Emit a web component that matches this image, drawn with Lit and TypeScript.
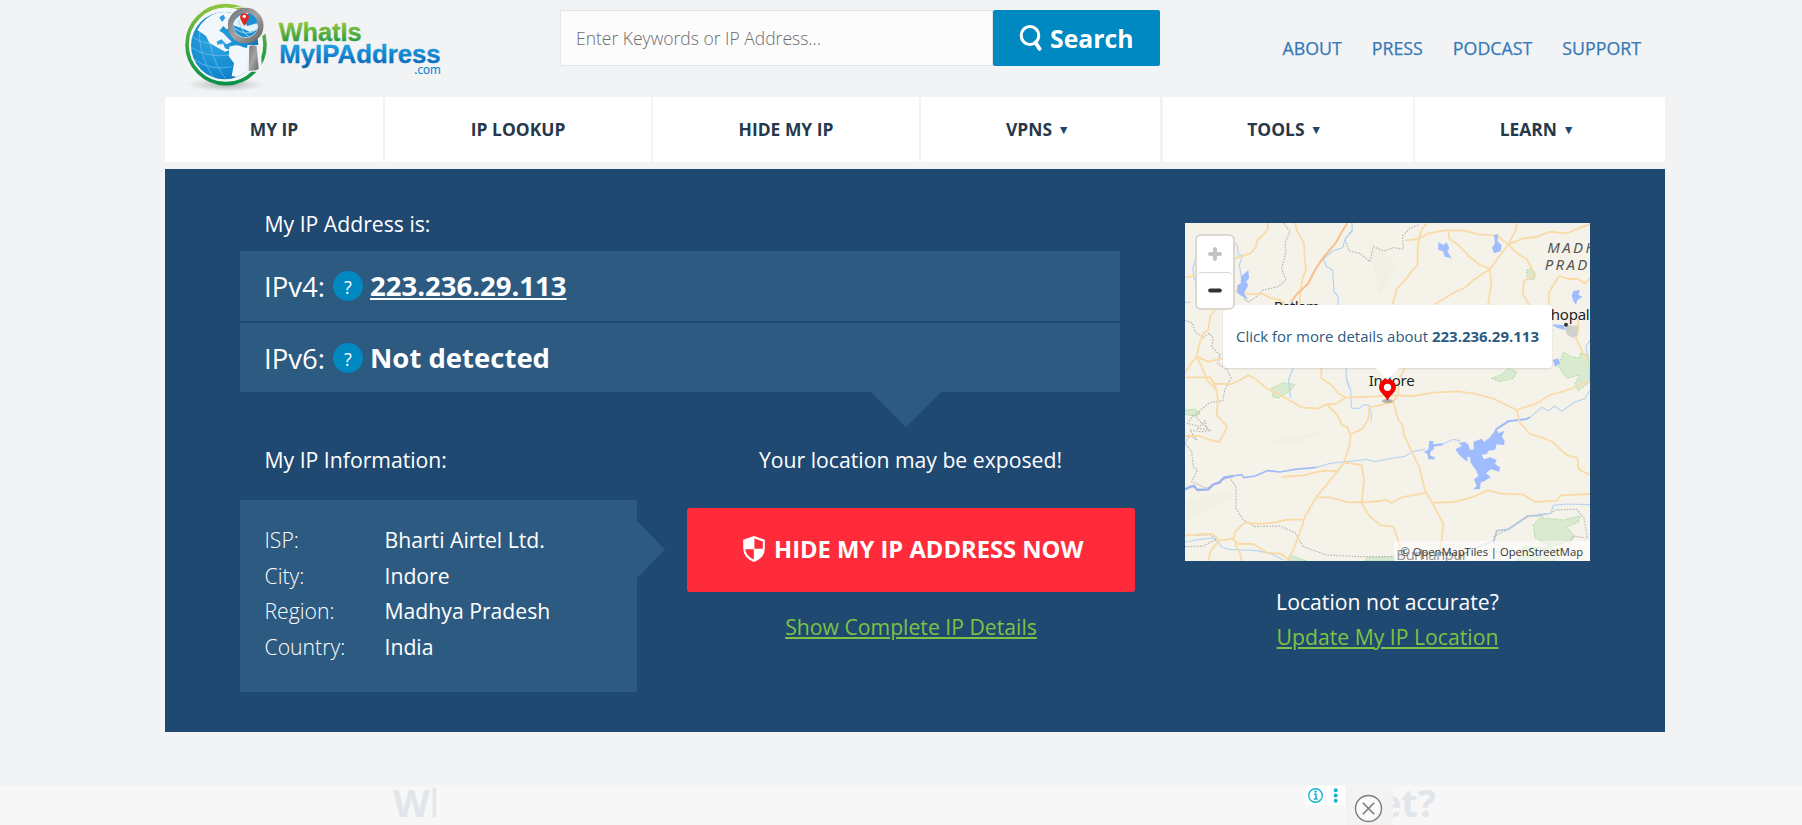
import { LitElement, html, svg, css } from "lit";
import { customElement } from "lit/decorators.js";

const topLinks = ["ABOUT", "PRESS", "PODCAST", "SUPPORT"];
const navItems = [
  { label: "MY IP", menu: false },
  { label: "IP LOOKUP", menu: false },
  { label: "HIDE MY IP", menu: false },
  { label: "VPNS", menu: true },
  { label: "TOOLS", menu: true },
  { label: "LEARN", menu: true },
];
const info = [
  ["ISP:", "Bharti Airtel Ltd."],
  ["City:", "Indore"],
  ["Region:", "Madhya Pradesh"],
  ["Country:", "India"],
];

const roadsNorth = [
  "M345 24 L352 50 372 85 374 130 378 165 368 190 362 225 358 280",
  "M262 24 L264 42 250 60 232 75 228 95 212 115 190 122 160 132",
  "M160 228 L185 226 205 238 245 235 270 248 300 255 330 275",
  "M675 76 L715 72 745 55 795 46 850 46 895 58 950 62 985 88",
  "M742 24 L726 42 718 65 714 95 712 150 692 172 680 190 650 222 638 268",
  "M805 48 L808 72 835 90 868 125 900 150 930 162",
  "M1012 24 L1005 50 985 88 962 118 930 162 880 195 855 218 830 228 765 268",
  "M930 162 L934 205 924 272",
  "M985 88 L1015 118 1040 132 1054 158 1062 180 1032 198 1028 235 1048 272",
  "M985 88 L1030 70 1070 66 1110 50 1160 55 1200 38 1230 28",
  "M1108 285 L1106 235 1120 210 1138 183 1165 192 1195 192 1215 206 1230 190",
  "M1195 310 L1195 345 1188 370 1208 412 1230 440",
  "M15 187 L45 183",
  "M112 278 L92 300 84 345 70 355 58 385 50 425 30 450 15 475",
  "M50 425 L68 462 80 495 105 520",
  "M50 425 L85 440 130 430",
  "M675 460 L658 490 655 520",
];
const roadsSouth = [
  "M15 -8 L60 -8 90 -8 105 12 155 12 185 -2 205 -15 225 -4 260 25 305 48 365 82 412 86 440 73 465 72 500 52 580 50 625 46 700 48 760 38 830 34 880 40 940 56 1010 90 1070 70 1110 45 1150 34 1180 24 1230 0",
  "M424 -38 L424 -5 455 15 475 40 500 54",
  "M655 0 L655 40 640 66 655 120 668 135 672 165 695 215 718 260 735 330 762 378 790 432 786 470 775 545",
  "M640 66 L608 74 568 82 564 120 545 148 512 162 508 200 492 248 460 290 410 350 375 410 362 450 340 510 320 545",
  "M440 73 L470 102 486 135 502 142 510 165",
  "M492 248 L545 255 552 300 545 370 568 408 602 436 640 440 650 468 660 500 672 545",
  "M410 352 L450 352 505 367 570 366 620 360 635 369 665 352 738 338",
  "M305 291 L370 286 430 272 472 273",
  "M758 368 L820 366 870 354 925 331 960 340 1030 344 1065 366 1130 362 1142 346 1230 342",
  "M1010 90 L1020 128 1050 162 1085 172 1118 186 1160 225 1192 234 1196 268 1230 285",
  "M372 418 L315 420 290 426 240 432 195 427 165 455 160 480 175 492 220 492 262 518 305 522 330 545",
  "M15 466 L80 461 100 463 118 482 160 475",
  "M118 482 L92 512 84 545",
  "M165 490 L180 520 185 545",
  "M96 0 L108 25 114 60 110 105 142 140 118 186 90 180 58 168 15 168",
];
const streamsNorth = [
  "M516 24 L517 48 496 70 488 98 458 108 430 132 440 155 458 165 462 230 474 245 475 270",
  "M160 80 L172 92 175 118 188 122 178 150 184 185",
  "M48 130 L38 160 42 190 50 205",
  "M498 460 L500 495 508 520",
  "M340 460 L325 495 332 550",
  "M15 262 L30 262",
  "M1118 332 L1165 335",
  "M1230 375 L1218 395 1222 425",
];
const streamsSouth = [
  "M500 0 L512 30 514 84 535 86 552 74 566 76 573 95 574 122",
  "M410 262 L450 250 500 245 560 238 585 245 640 234 672 230 700 214 735 208",
  "M760 194 L790 192 820 178 838 182 840 195",
  "M1050 112 L1085 82 1105 92 1125 78 1145 94 1180 68 1215 56 1230 30",
  "M1230 374 L1160 372 1120 376 1112 400 1075 402",
  "M15 486 L60 478 100 474 125 500 145 508 230 512 270 520 310 540",
  "M945 480 L905 498 860 515",
];
const bordersNorth = [
  "M310 24 L330 48 315 85 318 110 305 160 318 195 295 215 250 225 225 248 205 262 190 250",
  "M516 45 L495 75 508 108 540 115 570 140 580 95 612 108 640 98 670 102 668 62 690 40 715 30",
  "M15 315 L38 325 45 350 70 368 88 355 100 370 95 395 120 420 112 445 140 462 155 492",
];
const bordersSouth = [
  "M150 0 L135 28 128 62 88 68 45 105 60 125 92 152 60 155 30 150 50 180 30 165 15 190 35 215 40 260 52 270 35 305 80 325 125 300 148 292 168 320 168 385 190 420 225 440 300 438 345 458 370 500 440 525 540 530 640 530",
  "M40 105 L22 130 60 140 75 122 80 148 48 145",
  "M940 470 L985 448 1040 408 1110 402 1125 390 1190 388 1212 415 1222 475 1180 468 1168 490",
  "M15 500 L70 498 108 478 90 464 40 466",
];

@customElement("app-root")
export class AppRoot extends LitElement {
  static styles = css`
    :host {
      display: block;
      height: 825px;
      overflow: hidden;
      background: #f1f3f5;
      font-family: "Open Sans", "Noto Sans", sans-serif;
      color: #fff;
    }
    .container { width: 1500px; margin-left: 165px; }
    header { display: flex; align-items: flex-start; height: 97px; }
    .logo { width: 280px; height: 97px; flex: none; margin-right: 115px; }
    .search { display: flex; margin-top: 10px; width: 600px; }
    .field {
      box-sizing: border-box; width: 433px; height: 56px; padding-left: 15px;
      border: 1px solid #e2e5e8; background: #fcfcfc;
      font: 300 17.5px/54px "Open Sans", sans-serif; color: #6c6c6c;
    }
    .go {
      box-sizing: border-box; width: 167px; height: 56px; padding-left: 25px;
      display: flex; align-items: center; gap: 5px;
      background: #0088c0; border-radius: 2px; font-weight: 700; font-size: 24.8px; line-height: 54px;
    }
    .go svg { width: 27px; height: 28px; }
    .links { margin: 36px 24px 0 auto; display: flex; gap: 30px; font-size: 17.8px; line-height: 24px; color: #3679b7; -webkit-text-stroke: 0.25px #3679b7; }
    nav {
      display: grid; grid-template-columns: 218px 265.5px 265.5px 239px 250px 250px;
      justify-content: space-between; height: 65px; margin-bottom: 7px;
    }
    .tab {
      display: flex; align-items: center; justify-content: center; gap: 8px; padding-bottom: 1px;
      background: #fff; color: #27384a; font-weight: 700; font-size: 17.45px;
    }
    .arrow { font: 9.5px "DejaVu Sans", sans-serif; color: #204972; margin-right: 8px; padding-top: 1px; }

    .hero { display: flex; box-sizing: border-box; height: 563px; padding-left: 75px; background: #204972; font-size: 21.2px; line-height: 30px; }
    .left { width: 945px; padding-top: 40px; }
    .heading { padding-left: 24.5px; }
    .ips { position: relative; width: 880px; margin-top: 12px; display: grid; grid-template-rows: 70px 69px; gap: 2px; }
    .ip { display: flex; align-items: flex-start; padding: 20px 0 0 24px; background: #2d5a80; line-height: 30px; box-sizing: border-box; }
    .ver { width: 69px; font-weight: 400; font-size: 27.6px; }
    .help { width: 30px; height: 30px; margin-right: 7px; border-radius: 50%; background: #0088c0; text-align: center; font-size: 18px; line-height: 32px; }
    .val { font-weight: 700; font-size: 27.5px; }
    .under { text-decoration: underline; text-decoration-thickness: 2px; text-underline-offset: 2px; }
    .down { position: absolute; left: 631px; top: 141px; width: 70px; height: 35px; background: #2d5a80; clip-path: polygon(0 0, 100% 0, 50% 100%); }
    .lower { display: grid; grid-template-columns: 397px 448px; gap: 50px; margin-top: 53px; }
    .panel { position: relative; box-sizing: border-box; height: 192px; margin-top: 25px; padding: 22.4px 0 0 24.5px; background: #2d5a80; }
    .side { position: absolute; left: 397px; top: 21px; width: 28px; height: 57px; background: #2d5a80; clip-path: polygon(0 0, 100% 50%, 0 100%); }
    .row { display: grid; grid-template-columns: 120px 1fr; line-height: 35.4px; font-size: 21.2px; }
    .key { font-weight: 300; }
    .cta { text-align: center; }
    .cta > div:first-child { margin-right: 1px; }
    .hide {
      display: flex; align-items: center; gap: 8px; box-sizing: border-box; height: 84px; margin: 33px 0 20px; padding: 0 0 2px 55px;
      border-radius: 3px; background: #ff2b3a; font-weight: 700; font-size: 23.75px;
    }
    .hide svg { width: 24px; height: 28px; }
    .green { color: #7dc243; text-decoration: underline; text-decoration-thickness: 2px; text-underline-offset: 2px; }
    .right { width: 405px; padding-top: 54px; text-align: center; line-height: 35px; }
    .map { position: relative; width: 405px; height: 338px; margin-bottom: 22.5px; overflow: hidden; background: #f5f2ea; }
    .tiles { display: block; width: 405px; height: 338px; }
    .popup {
      position: absolute; left: 38px; top: 82px; width: 329px; height: 63px; border-radius: 3px; background: #fff;
      box-shadow: 0 1px 2px rgba(0, 0, 0, 0.12); color: #2c5a80; font-size: 14.98px; line-height: 63px; white-space: nowrap;
    }
    .tip { position: absolute; left: 191px; top: 145px; width: 23px; height: 12px; background: #fff; clip-path: polygon(0 0, 100% 0, 50% 100%); }
    .pin { position: absolute; left: 192px; top: 155px; width: 21px; height: 28px; }
    .zoom { position: absolute; left: 10px; top: 11px; width: 36px; border: 2px solid #dcd8d0; border-radius: 6px; background: #fff; }
    .zoom svg { display: block; width: 36px; height: 36px; }
    .zoom .minus { border-top: 1px solid #d8d8d8; border-radius: 5px; height: 35px; }
    .credit { position: absolute; right: 0; bottom: 0; height: 20px; padding: 0 7px; background: rgba(255, 255, 255, 0.5); color: #333; font-size: 11.2px; line-height: 21px; }

    footer { display: flex; height: 40px; margin-top: 53px; padding-left: 393px; background: linear-gradient(#f1f3f5 1px, #f7f7f7 1px); }
    .ghost { height: 40px; overflow: hidden; display: flex; color: #e2e6ea; font-weight: 700; font-size: 38px; line-height: 34px; }
    .start { width: 43px; }
    .end { width: 43px; justify-content: flex-end; }
    .ad { width: 957px; display: flex; justify-content: flex-end; background: #f7f7f7; }
    .chip { width: 19px; height: 19px; margin: 1px 1px 0 0; background: #fff; }
    .close { width: 47px; height: 39px; margin-top: 1px; background: #f4f3f2; }
    .chip svg, .close svg { display: block; }
  `;

  private logo() {
    return html`<svg class="logo" viewBox="15 0 840 291" role="img" aria-label="WhatIsMyIPAddress.com">
      <defs>
        <linearGradient id="ring" x1="0" y1="0" x2="0" y2="1"><stop offset="0" stop-color="#8cc63f" /><stop offset=".6" stop-color="#2fa045" /><stop offset="1" stop-color="#0a9247" /></linearGradient>
        <radialGradient id="sea" cx=".35" cy=".45" r=".8"><stop offset="0" stop-color="#2ea6e2" /><stop offset=".6" stop-color="#1287cf" /><stop offset="1" stop-color="#0a5fa8" /></radialGradient>
        <linearGradient id="green" x1="0" y1="0" x2="0" y2="1"><stop offset=".2" stop-color="#8bc540" /><stop offset=".9" stop-color="#1f9440" /></linearGradient>
        <linearGradient id="blue" x1="0" y1="0" x2="0" y2="1"><stop offset=".2" stop-color="#1f9fe0" /><stop offset=".85" stop-color="#0869ba" /></linearGradient>
        <linearGradient id="steel" x1="0" y1="0" x2="1" y2="1"><stop offset="0" stop-color="#777" /><stop offset=".5" stop-color="#a5a5a5" /><stop offset="1" stop-color="#666" /></linearGradient>
        <radialGradient id="shade"><stop offset="0" stop-color="#9a9a9a" stop-opacity=".8" /><stop offset="1" stop-color="#bbb" stop-opacity="0" /></radialGradient>
        <clipPath id="globe"><circle cx="194" cy="137" r="101" /></clipPath>
        <clipPath id="glass"><circle cx="257" cy="75" r="37" /></clipPath>
      </defs>
      <ellipse cx="198" cy="254" rx="120" ry="22" fill="url(#shade)" />
      <circle cx="198" cy="134" r="117" fill="#f4f6f8" stroke="url(#ring)" stroke-width="11" />
      <circle cx="194" cy="137" r="101" fill="url(#sea)" />
      <g clip-path="url(#globe)">
        <g fill="none" stroke="#8fd0f3" stroke-width="2" opacity=".8">
          <path d="M90 140 Q140 175 210 165 M98 175 Q150 215 215 200 M120 80 Q110 160 165 240 M160 60 Q130 150 200 240 M95 110 Q140 140 200 130" />
        </g>
        <path fill="#f2f7fb" d="M112 90 Q135 45 190 32 L235 40 225 75 200 88 190 78 178 92 190 100 215 125 200 133 184 118 170 125 172 134 190 132 195 145 210 150 195 155 168 140 148 128 138 108 124 98 Z" />
        <path fill="#2b9ddb" d="M178 52 l12 -8 6 10 -10 12 z M205 60 l10 -6 4 12 -12 6 z" />
        <path fill="#f2f7fb" d="M208 140 Q232 130 250 142 L300 150 290 210 250 235 215 228 222 190 206 168 Z" />
      </g>
      <path d="M215 25 Q245 12 285 35 Q318 70 302 112 L318 100 325 60 280 20 Z" fill="#f1f3f5" />
      <path d="M262 135 L302 135 306 215 258 215 Z" fill="#f1f3f5" />
      <path d="M268 139 Q279 133 290 139 L296 207 Q282 214 266 212 Z" fill="url(#steel)" />
      <circle cx="257" cy="77" r="45" fill="#e8f2fa" stroke="url(#steel)" stroke-width="17" />
      <g clip-path="url(#glass)">
        <circle cx="257" cy="75" r="37" fill="#1d8fd4" />
        <path d="M216 75 Q232 40 266 38 L250 62 262 78 290 70 300 86 270 96 244 84 Z" fill="#e3f1fa" />
        <path d="M222 84 Q258 112 292 88 M236 60 Q240 90 268 112" fill="none" stroke="#9ed6f4" stroke-width="3" />
      </g>
      <path d="M253 78 Q240 58 240 50 A14 14 0 0 1 267 50 Q267 58 253 78Z" fill="#dd2a1b" />
      <circle cx="253" cy="49" r="5" fill="#fff" />
      <g font-family="Liberation Sans, Arial, sans-serif" font-weight="700" stroke-linejoin="round">
        <text x="356" y="124" font-size="80" textLength="249" lengthAdjust="spacingAndGlyphs" fill="url(#green)" stroke="url(#green)" stroke-width="1">WhatIs</text>
        <text x="358" y="190" font-size="78" textLength="484" lengthAdjust="spacingAndGlyphs" fill="url(#blue)" stroke="url(#blue)" stroke-width="1">MyIPAddress</text>
      </g>
      <text x="763" y="221" font-family="Open Sans, sans-serif" font-size="37" textLength="79" lengthAdjust="spacingAndGlyphs" fill="#1585cb" stroke="#1585cb" stroke-width=".6">.com</text>
    </svg>`;
  }

  private lines(list: string[], color: string, width: number, dash = "") {
    return list.map((d) => svg`<path d=${d} fill="none" stroke=${color} stroke-width=${width} stroke-linejoin="round" stroke-dasharray=${dash} />`);
  }

  private tiles() {
    return html`<svg class="tiles" viewBox="15 24 1215 1014">
      <g fill="#f1ede4" opacity=".8">
        <path d="M15 860 Q90 830 160 840 L110 870 30 915 15 915Z M260 680 L420 650 350 690Z M560 60 L650 150 600 240 580 150Z" />
      </g>
      <g fill="#d9ead0" stroke="#a5dba0" stroke-width="3" stroke-dasharray="5 4">
        <path d="M1040 165 L1055 160 1068 178 1060 195 1042 190Z" />
        <path d="M1150 412 L1175 425 1200 430 1200 415 1225 420 1230 500 1195 528 1185 505 1200 480 1160 490 1135 455Z" />
        <path d="M935 490 L965 478 985 460 1010 470 1000 490 960 500Z" />
        <path d="M275 520 L310 503 345 508 330 528 295 550 278 545Z" />
        <path d="M15 585 L45 582 62 595 45 604 15 598Z" />
        <path d="M1060 930 L1080 908 1150 915 1200 903 1195 922 1160 935 1185 965 1150 985 1110 995 1065 968Z" />
        <path d="M325 1038 L330 1020 380 1038Z M555 1038 L560 1028 640 1024 645 1038Z M1010 1038 L1030 995 1120 1000 1130 1038Z" />
      </g>
      ${this.lines(bordersNorth, "#b9b7b2", 3.5, "5 4")}
      <g transform="translate(0 495)">${this.lines(bordersSouth, "#b9b7b2", 3.5, "5 4")}</g>
      ${this.lines(streamsNorth, "#b3d3f0", 3.5)}
      <g transform="translate(0 495)">
        ${this.lines(streamsSouth, "#b9d6ee", 3.5)}
        <path d="M15 328 L32 320 42 318 52 330 85 328 100 313 118 308 132 293 160 288" fill="none" stroke="#9db4f3" stroke-width="7" stroke-linejoin="round" />
        <path d="M160 288 L185 284 192 293 225 288 262 272 300 276 345 268 410 262" fill="none" stroke="#a0bcf8" stroke-width="5" stroke-linejoin="round" />
        <path d="M948 148 L985 124 1035 118 1050 112" fill="none" stroke="#9dbcfb" stroke-width="6" />
        <path d="M940 490 L950 452 985 448 1045 408 1090 406" fill="none" stroke="#b4c6dd" stroke-width="5" />
      </g>
      ${this.lines(roadsNorth, "#f9dba8", 5.4)}
      <g transform="translate(0 495)">${this.lines(roadsSouth, "#f9dba8", 5.4)}</g>
      <path d="M502 24 L480 60 468 82 428 130 405 165 385 205 350 238 332 262" fill="none" stroke="#f8c08a" stroke-width="6" />
      <g fill="#9fbdfe">
        <path d="M205 165 L207 190 198 200 205 210 192 235 205 255 185 243 172 235 172 212 182 205 183 185Z" />
        <path d="M775 82 L790 90 800 82 808 100 802 108 815 130 795 125 788 108 775 105Z" />
        <path d="M942 60 L955 58 952 78 965 90 962 108 942 115 936 98 945 85Z" />
        <path d="M1180 228 L1200 225 1195 240 1208 245 1192 255 1188 270 1180 258 1175 242Z" />
        <path d="M1118 328 L1150 330 1155 345 1130 338Z M1118 435 L1135 430 1140 445 1125 455Z" />
        <path transform="translate(0 495)" d="M748 182 L762 184 758 193 790 190 788 196 762 200 760 210 752 214 750 226 764 232 764 238 745 238 742 222 732 216 745 208Z" />
        <path transform="translate(0 495)" d="M826 208 L845 198 840 188 855 185 866 195 870 210 882 208 880 186 905 176 912 186 930 172 940 158 948 145 955 160 973 152 966 170 974 184 972 195 950 193 945 210 925 212 920 222 905 225 912 238 930 232 950 240 945 252 960 262 958 275 932 268 918 280 932 292 915 302 902 308 900 328 880 328 890 318 882 298 895 288 888 270 872 248 870 232 862 230 862 245 850 236 838 225Z" />
      </g>
      <path d="M1155 340 L1165 330 1195 333 1192 360 1180 370 1160 358Z" fill="#d3d1cc" />
      <circle cx="1158" cy="329" r="6" fill="#333" />
      <g font-family="Noto Sans, Open Sans, sans-serif" fill="#222" stroke="#f8f5ee" stroke-width="4" paint-order="stroke" font-size="45">
        <text x="281" y="292" textLength="138">Ratlam</text>
        <text x="566" y="514" textLength="138">Indore</text>
        <text x="1084" y="315" textLength="145">Bhopal</text>
        <text x="1102" y="115" font-style="italic" letter-spacing="7" fill="#555">MADHYA</text>
        <text x="1094" y="165" font-style="italic" letter-spacing="7" fill="#555">PRADESH</text>
        <text x="649" y="1034" fill="#333" textLength="215">Burhanpur</text>
      </g>
    </svg>`;
  }

  render() {
    return html`
      <div class="container">
        <header>
          ${this.logo()}
          <div class="search">
            <div class="field">Enter Keywords or IP Address...</div>
            <div class="go">
              <svg viewBox="0 0 27 28" fill="none" stroke="#fff"><ellipse cx="12" cy="11.5" rx="8.8" ry="9" stroke-width="3" /><path d="M17.5 18.5 L21.5 24.8" stroke-width="4" stroke-linecap="round" /></svg>
              <span>Search</span>
            </div>
          </div>
          <div class="links">${topLinks.map((t) => html`<span>${t}</span>`)}</div>
        </header>
        <nav>
          ${navItems.map((n) => html`<div class="tab"><span>${n.label}</span>${n.menu ? html`<span class="arrow">▼</span>` : ""}</div>`)}
        </nav>
        <section class="hero">
          <div class="left">
            <div class="heading">My IP Address is:</div>
            <div class="ips">
              <div class="ip"><span class="ver">IPv4:</span><span class="help">?</span><span class="val under">223.236.29.113</span></div>
              <div class="ip"><span class="ver">IPv6:</span><span class="help">?</span><span class="val">Not detected</span></div>
              <div class="down"></div>
            </div>
            <div class="lower">
              <div>
                <div class="heading">My IP Information:</div>
                <div class="panel">
                  ${info.map(([k, v]) => html`<div class="row"><span class="key">${k}</span><span>${v}</span></div>`)}
                  <div class="side"></div>
                </div>
              </div>
              <div class="cta">
                <div>Your location may be exposed!</div>
                <div class="hide">
                  <svg viewBox="0 0 24 28"><path d="M12 1 L22.8 4.8 V13 Q22.8 23 12 27 Q1.2 23 1.2 13 V4.8Z" fill="#fff" /><path d="M12.4 3.6 L20.8 6.4 V13.8 H12.4Z M11.8 14.2 V24.4 Q4 21 3.2 14.2Z" fill="#ff2b3a" /></svg>
                  <span>HIDE MY IP ADDRESS NOW</span>
                </div>
                <span class="green">Show Complete IP Details</span>
              </div>
            </div>
          </div>
          <div class="right">
            <div class="map">
              ${this.tiles()}
              <svg class="pin" viewBox="0 0 21 28"><ellipse cx="10.5" cy="23" rx="5.5" ry="2" fill="#555" opacity=".4" /><path d="M10.5 23 C9 18 2 14.5 2 9.3 A8.5 8.5 0 0 1 19 9.3 C19 14.5 12 18 10.5 23Z" fill="#f80000" /><circle cx="10.5" cy="9.3" r="3.6" fill="#fff" /></svg>
              <div class="popup">Click for more details about <b>223.236.29.113</b></div>
              <div class="tip"></div>
              <div class="zoom">
                <svg viewBox="0 0 36 36" stroke="#c4c4c4" stroke-width="4" stroke-linecap="round"><path d="M13 18 H23 M18 13 V23" /></svg>
                <svg class="minus" viewBox="0 0 36 36" stroke="#333" stroke-width="4" stroke-linecap="round"><path d="M13 18 H23" /></svg>
              </div>
              <div class="credit">© OpenMapTiles | OpenStreetMap</div>
            </div>
            <div>Location not accurate?</div>
            <div><span class="green">Update My IP Location</span></div>
          </div>
        </section>
      </div>
      <footer>
        <div class="ghost start">Wh</div>
        <div class="ad">
          <div class="chip"><svg width="19" height="19" viewBox="0 0 19 19"><circle cx="9.5" cy="9.5" r="6.8" fill="none" stroke="#16b3cd" stroke-width="1.4" /><path d="M8 8.2 H10 V13 M7.8 13 H11.6" fill="none" stroke="#16b3cd" stroke-width="1.6" /><circle cx="9.6" cy="5.6" r="1.2" fill="#16b3cd" /></svg></div>
          <div class="chip"><svg width="19" height="19" viewBox="0 0 19 19" fill="#16b3cd"><circle cx="9.7" cy="4.3" r="2" /><circle cx="9.7" cy="9.5" r="2" /><circle cx="9.7" cy="14.7" r="2" /></svg></div>
          <div class="close"><svg width="47" height="39" viewBox="0 0 47 39" fill="none" stroke="#7c7c7c"><circle cx="22.5" cy="22.5" r="13" fill="#fafafa" stroke-width="1.4" /><path d="M16.8 16.8 L28.2 28.2 M28.2 16.8 L16.8 28.2" stroke-width="1.6" /></svg></div>
        </div>
        <div class="ghost end">et?</div>
      </footer>
    `;
  }
}
